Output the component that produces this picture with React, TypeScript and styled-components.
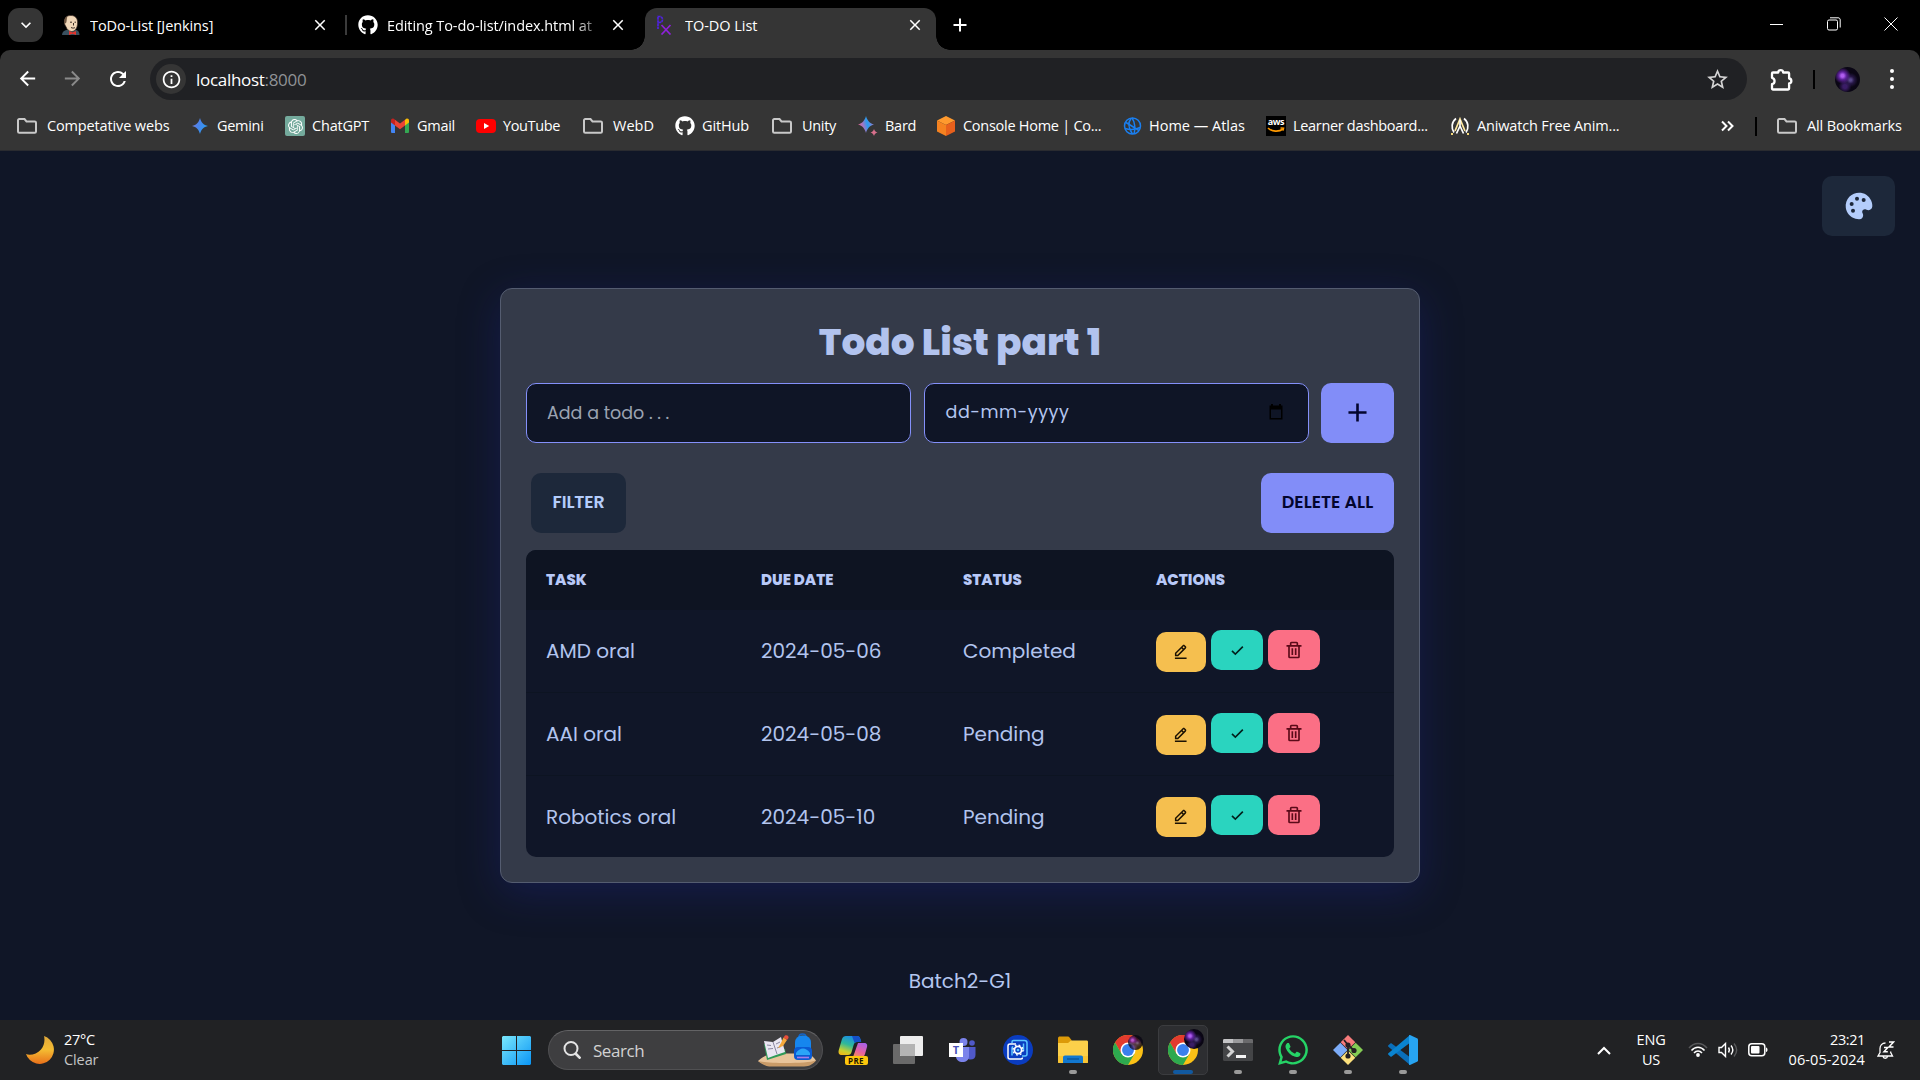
import React from "react";
import styled, { createGlobalStyle } from "styled-components";
import { BiCheck, BiEditAlt, BiPlus, BiSolidPalette, BiTrash } from "react-icons/bi";
import { FaGithub, FaWhatsapp } from "react-icons/fa";
import { SiOpenai } from "react-icons/si";
import {
  MdArrowBack,
  MdArrowForward,
  MdClose,
  MdKeyboardArrowDown,
  MdOutlineInfo,
  MdRefresh,
  MdStarOutline,
} from "react-icons/md";

const UI = `"Segoe UI", "Open Sans", "Noto Sans", sans-serif`;
const PAGE = `"Poppins", "Inter", sans-serif`;

const GlobalStyle = createGlobalStyle`
  * { box-sizing: border-box; }
  html, body { margin: 0; padding: 0; background: #101627; }
  body { width: 1920px; height: 1080px; overflow: hidden; font-family: ${UI}; }
  svg { display: block; flex: none; }
`;

const Screen = styled.div`
  display: flex;
  flex-direction: column;
  width: 1920px;
  height: 1080px;
  overflow: hidden;
`;

const Label = styled.span<{ $ls?: number; $size?: number; $color?: string }>`
  font-size: ${(p) => p.$size ?? 14.5}px;
  letter-spacing: ${(p) => p.$ls ?? 0}px;
  color: ${(p) => p.$color ?? "#fff"};
  white-space: nowrap;
`;

/* ---------- browser window ---------- */

const Browser = styled.header`
  height: 151px;
  background: #000;
  color: #fff;
`;

const TabStrip = styled.div`
  display: flex;
  height: 50px;
  padding: 8px 0 0 8px;
`;

const TabSearch = styled.div`
  display: grid;
  place-items: center;
  width: 35px;
  height: 34px;
  margin-right: 7px;
  border-radius: 11px;
  background: #353535;
`;

const Tab = styled.div<{ $width: number; $end: number; $active?: boolean }>`
  position: relative;
  display: flex;
  align-items: center;
  width: ${(p) => p.$width}px;
  height: 42px;
  padding: 0 ${(p) => p.$end}px 8px 11px;
  border-radius: 12px 12px 0 0;
  background: ${(p) => (p.$active ? "#353535" : "transparent")};
  &::before, &::after {
    content: "";
    display: ${(p) => (p.$active ? "block" : "none")};
    position: absolute;
    bottom: 0;
    width: 14px;
    height: 14px;
  }
  &::before { left: -14px; background: radial-gradient(circle at 0 0, transparent 13.5px, #353535 14px); }
  &::after { right: -14px; background: radial-gradient(circle at 100% 0, transparent 13.5px, #353535 14px); }
`;

const TabTitle = styled.div<{ $gap?: number; $fade?: boolean }>`
  flex: 1;
  margin-left: ${(p) => p.$gap ?? 9}px;
  overflow: hidden;
  white-space: nowrap;
  ${(p) => p.$fade && "margin-right: 10px; mask-image: linear-gradient(90deg, #000 88%, rgba(0,0,0,.3) 99%);"}
`;

const TabDivider = styled.i`
  width: 2px;
  height: 20px;
  margin: 7px 0 0;
  background: #3b3b3b;
`;

const NewTab = styled.div`
  margin: 9px 0 0 16px;
`;

const WindowControls = styled.div`
  display: flex;
  gap: 43px;
  margin: 9px 22px 0 auto;
`;

const Chrome = styled.div`
  height: 101px;
  border-radius: 10px 10px 0 0;
  background: #353535;
  border-bottom: 1px solid #2a2b30;
`;

const Toolbar = styled.div`
  display: flex;
  align-items: center;
  height: 58px;
  padding: 0 16px;
`;

const NavButtons = styled.div`
  display: flex;
  gap: 22px;
  width: 134px;
`;

const Omnibox = styled.div`
  display: flex;
  align-items: center;
  width: 1597px;
  height: 42px;
  padding: 0 17px 0 6px;
  border-radius: 21px;
  background: #202124;
`;

const SiteInfo = styled.div`
  display: grid;
  place-items: center;
  width: 30px;
  height: 30px;
  margin-right: 10px;
  border-radius: 50%;
  background: #353535;
`;

const Url = styled.div`
  flex: 1;
`;

const ToolbarEnd = styled.div`
  display: flex;
  align-items: center;
  margin-left: 22px;
`;

const Bar = styled.i<{ $h: number; $m: string }>`
  width: 2px;
  height: ${(p) => p.$h}px;
  margin: ${(p) => p.$m};
  background: #000;
`;

const Avatar = styled.div<{ $size: number }>`
  width: ${(p) => p.$size}px;
  height: ${(p) => p.$size}px;
  border-radius: 50%;
  background:
    radial-gradient(circle at 30% 35%, #b05df0 0 6%, rgba(110, 40, 180, 0.85) 16%, transparent 34%),
    radial-gradient(circle at 62% 52%, #5a4a8c 0 5%, rgba(50, 30, 90, 0.7) 18%, transparent 36%),
    radial-gradient(circle at 40% 78%, #3a1c66 0 8%, transparent 26%),
    #0a0614;
`;

const Dots = styled.div`
  display: grid;
  gap: 4px;
  margin-left: 30px;
  i { width: 4px; height: 4px; border-radius: 50%; background: #fff; }
`;

const Bookmarks = styled.div`
  display: grid;
  grid-template-columns: 173px 95px 105px 86px 107px 92px 97px 86px 78px 186px 144px 184px 270px 35px 22px 1fr;
  align-items: center;
  height: 36px;
  padding-left: 17px;
`;

const Bookmark = styled.div<{ $folder?: boolean }>`
  display: flex;
  align-items: center;
  gap: ${(p) => (p.$folder ? 10 : 7)}px;
  ${Label} { margin-top: -2px; }
`;

/* ---------- todo page ---------- */

const Page = styled.main`
  display: flex;
  flex-direction: column;
  align-items: center;
  height: 869px;
  background: #101627;
  color: #b4c6ef;
  font-family: ${PAGE};
`;

const ThemeRow = styled.div`
  display: flex;
  justify-content: flex-end;
  width: 100%;
  padding: 25px 25px 0 0;
`;

const Button = styled.button<{ $width: number; $tone: "dark" | "primary"; $ls?: number }>`
  display: grid;
  place-items: center;
  width: ${(p) => p.$width}px;
  height: 60px;
  padding: 0 0 2px;
  border: 0;
  border-radius: 10px;
  background: ${(p) => (p.$tone === "dark" ? "#1d283a" : "#828df8")};
  color: ${(p) => (p.$tone === "dark" ? "#b4cdfb" : "#03052e")};
  font: 600 17.5px ${PAGE};
  letter-spacing: ${(p) => p.$ls ?? 0}px;
`;

const IconButton = styled(Button)`
  padding: 0;
`;

const Card = styled.section`
  width: 920px;
  height: 595px;
  margin-top: 52px;
  padding: 0 25px;
  border: 1px solid #545c70;
  border-radius: 12px;
  background: #343a49;
  box-shadow: 0 10px 40px rgba(31, 38, 135, 0.37);
`;

const Title = styled.h1`
  margin: 30px 0 0;
  height: 64px;
  color: #b2c3ee;
  text-align: center;
  font-size: 37.5px;
  line-height: 46px;
  font-weight: 800;
`;

const Form = styled.div`
  display: flex;
  justify-content: space-between;
`;

const Field = styled.div<{ $placeholder?: boolean }>`
  display: flex;
  align-items: center;
  justify-content: space-between;
  width: 385px;
  height: 60px;
  padding: ${(p) => (p.$placeholder ? "0 25px 1px 20px" : "0 25px 3px 21px")};
  border: 1px solid #8490fa;
  border-radius: 10px;
  background: #0f1526;
  color: ${(p) => (p.$placeholder ? "#9ba3b2" : "#b4c6ef")};
  font-size: 17.5px;
  letter-spacing: ${(p) => (p.$placeholder ? 0 : 0.55)}px;
`;

const Filters = styled.div`
  display: flex;
  justify-content: space-between;
  margin: 30px 0 17px;
  padding-left: 5px;
`;

const Table = styled.div`
  height: 307px;
  border-radius: 10px;
  background: #101628;
  overflow: hidden;
`;

const Row = styled.div<{ $head?: boolean }>`
  display: grid;
  grid-template-columns: 215px 202px 193px 1fr;
  align-items: center;
  height: ${(p) => (p.$head ? 60 : 83)}px;
  padding: ${(p) => (p.$head ? "0 0 2px 20px" : "0 0 0 20px")};
  background: ${(p) => (p.$head ? "#0e1422" : "transparent")};
  font-size: ${(p) => (p.$head ? 15 : 20)}px;
  font-weight: ${(p) => (p.$head ? 800 : 400)};
  border-bottom: ${(p) => (p.$head ? "0" : "1px solid #0d1422")};
  color: ${(p) => (p.$head ? "#b8c9f8" : "#b2c4ee")};
  &:last-child { height: 81px; border-bottom: 0; }
`;

const Cell = styled.span`
  white-space: nowrap;
`;

const Actions = styled.div`
  display: flex;
  gap: 5px;
  padding-bottom: 3px;
`;

const Action = styled.button<{ $kind: "edit" | "done" | "delete" }>`
  display: grid;
  place-items: center;
  width: ${(p) => (p.$kind === "edit" ? 50 : 52)}px;
  height: 40px;
  margin-top: ${(p) => (p.$kind === "edit" ? 2 : 0)}px;
  margin-bottom: ${(p) => (p.$kind === "edit" ? -2 : 0)}px;
  padding: 0;
  border: 0;
  border-radius: 10px;
  background: ${(p) => ({ edit: "#f5bf4f", done: "#2ad4bf", delete: "#fb6f85" })[p.$kind]};
  color: ${(p) => ({ edit: "#1c1203", done: "#02211c", delete: "#5a0a18" })[p.$kind]};
`;

const Credit = styled.p`
  margin: 85px 0 0;
  font-size: 20px;
  line-height: 26px;
`;

/* ---------- taskbar ---------- */

const Taskbar = styled.footer`
  display: flex;
  align-items: center;
  height: 60px;
  background: #212224;
`;

const Weather = styled.div`
  display: flex;
  align-items: center;
  gap: 10px;
  width: 502px;
  padding-left: 26px;
`;

const Stack = styled.div<{ $align?: string }>`
  display: flex;
  flex-direction: column;
  align-items: ${(p) => p.$align ?? "flex-start"};
  line-height: 20px;
`;

const SearchBox = styled.div`
  display: flex;
  align-items: center;
  width: 275px;
  height: 40px;
  margin: 0 2px 0 17px;
  padding: 0 6px 0 14px;
  border: 1px solid #505052;
  border-top-color: #636365;
  border-radius: 20px;
  background: #3e3e40;
`;

const SearchText = styled.div`
  flex: 1;
  margin-left: 12px;
`;

const Apps = styled.div`
  display: grid;
  grid-template-columns: repeat(11, 55px);
`;

const AppSlot = styled.div<{ $state?: "open" | "focused" }>`
  position: relative;
  display: grid;
  place-items: center;
  justify-self: center;
  width: 50px;
  height: 50px;
  border-radius: 5px;
  border: 1px solid ${(p) => (p.$state === "focused" ? "#3b3c3f" : "transparent")};
  background: ${(p) => (p.$state === "focused" ? "#2d2e31" : "transparent")};
  &::after {
    content: "";
    display: ${(p) => (p.$state ? "block" : "none")};
    position: absolute;
    bottom: 0;
    left: 50%;
    transform: translateX(-50%);
    width: ${(p) => (p.$state === "focused" ? 20 : 8)}px;
    height: 4px;
    border-radius: 2px;
    background: ${(p) => (p.$state === "focused" ? "#1159a0" : "#9a9a9a")};
  }
`;

const ProfileBadge = styled.div<{ $top: number; $right: number; $dim?: boolean }>`
  position: absolute;
  top: ${(p) => p.$top}px;
  right: ${(p) => p.$right}px;
  opacity: ${(p) => (p.$dim ? 0.8 : 1)};
`;

const Tray = styled.div`
  display: flex;
  align-items: center;
  margin-left: auto;
  padding-right: 25px;
`;

const Language = styled(Stack)`
  margin-left: 26px;
`;

const Clock = styled(Stack)`
  margin-right: 12px;
`;

const TrayIcons = styled.div`
  display: flex;
  align-items: center;
  gap: 10px;
  margin: 0 21px 0 22px;
`;

/* ---------- drawings ---------- */

const Folder = () => (
  <svg width="20" height="20" viewBox="0 0 20 20" fill="none" stroke="#c9c9c9" strokeWidth="2">
    <path d="M1 15.500V4.300c0-.8.5-1.300 1.300-1.300h5.200l2 2.400h8.200c.8 0 1.300.5 1.300 1.300v8.800c0 .8-.5 1.300-1.300 1.300H2.300c-.8 0-1.300-.5-1.300-1.300z" />
  </svg>
);

const Puzzle = () => (
  <svg width="25" height="25" viewBox="0 0 25 25">
    <path
      d="M4 5.500h5.300c-.2-3.300 5-3.300 4.800 0h5c.6 0 1 .4 1 1v5c3 .2 3 4.800 0 5v5c0 .6-.4 1-1 1H4c-.6 0-1-.4-1-1v-4.300c3.400-.6 3.400-5.800 0-6.400V6.500c0-.6.4-1 1-1z"
      fill="none"
      stroke="#fff"
      strokeWidth="2.300"
      strokeLinejoin="round"
    />
  </svg>
);

const Jenkins = () => (
  <svg width="20" height="20" viewBox="0 0 20 20">
    <path d="M1 20c0-3 2-4.500 5-5.200l8-.3c3 .6 4.500 2.500 4.500 5.500z" fill="#39505f" />
    <path d="M3.500 7C3.500 2 6 .5 10 .5S16.800 3 16.600 8c-.2 5-2.500 8.500-6.100 8.500-2.500 0-5-2.500-5.500-5C4 11 3.500 9 3.500 7z" fill="#f0d6b7" stroke="#3a2a22" strokeWidth=".7" />
    <path d="M3.500 9C2.500 5 4 2 6.500 1.200 5.500 3 6 5 5.300 7.500z" fill="#6d5540" />
    <path d="M9 7.200h2M13.500 7.200h1.500M10 12.500c1.500.8 3 .8 4 0M12.500 8v2.500" stroke="#3a2a22" strokeWidth="1" fill="none" />
    <path d="M8 16l3.500 1.500L15 16v4l-3.500-1.200L8 20z" fill="#e0342c" />
  </svg>
);

const PxLogo = () => (
  <svg width="16" height="20" viewBox="0 0 16 20" fill="none" strokeWidth="1.700">
    <path d="M2 14V1.500h1.500c4 0 4 6 0 6H2" stroke="#4f22e0" strokeDasharray="2.600 .5" />
    <path d="M5.500 10l9 9.500M14.500 10l-9 9.500" stroke="#8e20da" />
  </svg>
);

const Spark = ({ pink }: { pink?: boolean }) => (
  <svg width="20" height="20" viewBox="0 0 20 20">
    <defs>
      <linearGradient id={pink ? "bard" : "gem"} x1="0" x2="1" y1={pink ? ".7" : "0"} y2=".4">
        <stop offset="0" stopColor={pink ? "#ee5f80" : "#8a7fd0"} />
        <stop offset={pink ? ".35" : ".5"} stopColor={pink ? "#9c78c8" : "#4a84ec"} />
        <stop offset={pink ? ".6" : "1"} stopColor="#2a9cf0" />
        {pink && <stop offset="1" stopColor="#9c78c8" />}
      </linearGradient>
    </defs>
    {pink ? (
      <>
        <path d="M8 0c1.300 4.700 3.500 7 8 8.500-4.500 1.500-6.700 3.800-8 8.500-1.300-4.700-3.500-7-8-8.500C4.500 7 6.700 4.700 8 0z" fill="url(#bard)" />
        <path d="M16 13c.6 2 1.500 3 3.500 3.500-2 .5-2.900 1.500-3.500 3.500-.6-2-1.500-3-3.500-3.500 2-.5 2.900-1.500 3.500-3.500z" fill="#d8708c" />
      </>
    ) : (
      <path d="M10 2c1.200 4.600 3.400 6.800 8 8-4.600 1.200-6.800 3.400-8 8-1.200-4.600-3.400-6.800-8-8 4.600-1.200 6.800-3.400 8-8z" fill="url(#gem)" />
    )}
  </svg>
);

const ChatBox = styled.div`
  display: grid;
  place-items: center;
  width: 20px;
  height: 20px;
  border-radius: 2px;
  background: #74aa9c;
`;

const Gmail = () => (
  <svg width="20" height="20" viewBox="0 0 20 20">
    <path d="M1 4.500l4 3V17H2.300C1.500 17 1 16.500 1 15.700z" fill="#4285f4" />
    <path d="M19 4.500l-4 3V17h2.700c.8 0 1.300-.5 1.300-1.300z" fill="#34a853" />
    <path d="M15 3.700l1-.8c1.500-1 3 0 3 1.600v2l-4 3z" fill="#fbbc04" />
    <path d="M5 3.700L4 2.900c-1.500-1-3 0-3 1.600v2l4 3z" fill="#c5221f" />
    <path d="M5 3.700l5 3.800 5-3.800v5.800l-5 3.700-5-3.700z" fill="#ea4335" />
  </svg>
);

const YouTube = () => (
  <svg width="20" height="20" viewBox="0 0 20 20">
    <rect x="0" y="3" width="20" height="14" rx="4" fill="#f00" />
    <path d="M8 7l5.200 3L8 13z" fill="#fff" />
  </svg>
);

const Console = () => (
  <svg width="20" height="20" viewBox="0 0 20 20">
    <path d="M10 0l9 4.500-9 4.500-9-4.500z" fill="#ff9a2e" />
    <path d="M1 4.500L10 9v11l-9-4.500z" fill="#f58220" />
    <path d="M19 4.500L10 9v11l9-4.500z" fill="#e8601c" />
  </svg>
);

const Atlas = () => (
  <svg width="20" height="20" viewBox="0 0 20 20" fill="none" stroke="#1a7ff0" strokeWidth="1.500">
    <circle cx="10.500" cy="10" r="8" />
    <path d="M9 2.500C5.500 7 7 13 10.500 18M3 12.500c5 1.500 11 1 15-1M10 2c3 4 3.500 11 2 16M4 6.500l13 8" />
  </svg>
);

const AwsBox = styled.div`
  display: flex;
  flex-direction: column;
  align-items: center;
  width: 20px;
  height: 20px;
  background: #000;
  font: 700 9px/11px "Open Sans", sans-serif;
  letter-spacing: -0.4px;
`;

const Aws = () => (
  <AwsBox>
    aws
    <svg width="18" height="6" viewBox="0 0 18 6" fill="none" stroke="#ff9900" strokeWidth="1.600">
      <path d="M1 1c4 4 11 4 15 1M13.500 1l3 .2-.5 2.500" />
    </svg>
  </AwsBox>
);

const Aniwatch = () => (
  <svg width="20" height="20" viewBox="0 0 20 20" fill="none" strokeWidth="1.700">
    <path d="M6 2.500C1.500 6 1 12 4 16.500M14 2.500C18.500 6 19 12 16 16.500" stroke="#fff" />
    <path d="M5 15L10 3l5 12" stroke="#ffe9a0" />
    <path d="M6.500 17.500L10 10l3.500 7.500M10 4v6" stroke="#fff" />
    <path d="M1 18h2M17 18h2" stroke="#f5d97a" strokeWidth="2" />
  </svg>
);

const Calendar = () => (
  <svg width="14" height="16" viewBox="0 0 14 16">
    <path d="M2 0h2v1.500h6V0h2v1.500h1.500V15.500H.5V1.500H2zM2 5.500v8.500h10V5.500z" fill="#000" fillRule="evenodd" />
  </svg>
);

const Moon = () => (
  <svg width="28" height="28" viewBox="0 0 28 28">
    <defs>
      <linearGradient id="moon" x1="0" x2="0" y1="0" y2="1">
        <stop offset="0" stopColor="#e0a83a" />
        <stop offset=".5" stopColor="#f4bb32" />
        <stop offset="1" stopColor="#e8701a" />
      </linearGradient>
    </defs>
    <path d="M18 0a14.300 14.300 0 1 1-18 18C4 20 11 18 15 13.500 18.500 9.500 19 4 18 0z" fill="url(#moon)" />
  </svg>
);

const WindowsLogo = () => (
  <svg width="29" height="29" viewBox="0 0 29 29">
    <defs>
      <linearGradient id="win" gradientUnits="userSpaceOnUse" x1="0" y1="0" x2="29" y2="29">
        <stop offset="0" stopColor="#7ae8fc" />
        <stop offset="1" stopColor="#0a95f5" />
      </linearGradient>
    </defs>
    <path d="M1 0h13v14H0V1zM15 0h13l1 1v13H15zM0 15h14v14H1l-1-1zM15 15h14v13l-1 1H15z" fill="url(#win)" />
  </svg>
);

const SearchGlass = () => (
  <svg width="18" height="18" viewBox="0 0 18 18" fill="none" stroke="#e4e4e4" strokeWidth="2">
    <circle cx="8" cy="7.500" r="6.500" />
    <path d="M12.500 12.500l5 5" strokeWidth="2.600" />
  </svg>
);

const StudyArt = () => (
  <svg width="58" height="34" viewBox="0 0 58 34">
    <path d="M0 28C6 22 12 20.500 20 20.500h30c4 1.500 6 4.500 8 7-3 3-8 4-14 4H14C6 31.500 2 30 0 28z" fill="#e8c49a" />
    <path d="M0 28c8 2.500 48 3 58-.5-4 5-8 6-14 6H14C8 33.500 4 31.500 0 28z" fill="#c99b68" />
    <path d="M6 11l3 16 19-6-1-5z" fill="#2f9a58" />
    <path d="M6 8l9 1 8-5 4 15-9 3-8 3z" fill="#e9e6f2" />
    <path d="M15 9l4 12M9 12l4 .5M10 16l5-.5M18 11l4-2M19 15l4-1.500" stroke="#8a86a0" strokeWidth="1" fill="none" />
    <path d="M23 10L20 15l5-2 4-6-3.500-2.500z" fill="#f5a83a" />
    <path d="M25.500 4.500L27 2.500c2-1 4 .5 3.500 2.500L29 7z" fill="#e8503c" />
    <path d="M41 4c0-4 7-4 7 0" fill="none" stroke="#1464c8" strokeWidth="1.600" />
    <rect x="37" y="2.500" width="16" height="24" rx="7" fill="#1686ee" />
    <rect x="36" y="14" width="18" height="13" rx="4" fill="#0a5ad2" />
    <path d="M38 20c4-6 10-6 14 0v2H38z" fill="#2aa4f8" />
    <path d="M39 24.500h12" stroke="#a77be8" strokeWidth="1.600" />
  </svg>
);

const CopilotBox = styled.div`
  position: relative;
  width: 30px;
  height: 30px;
`;

const PreTag = styled.span`
  position: absolute;
  left: 7px;
  bottom: 0;
  width: 23px;
  height: 9px;
  border-radius: 2px;
  background: #fdc70c;
  color: #1c1600;
  font: 700 8px/9px "Open Sans", sans-serif;
  letter-spacing: 0.4px;
  text-align: center;
`;

const Copilot = () => (
  <CopilotBox>
    <svg width="30" height="30" viewBox="0 0 30 30">
      <defs>
        <linearGradient id="cpa" x1=".6" x2=".2" y1="0" y2="1">
          <stop offset="0" stopColor="#1a8be8" />
          <stop offset=".45" stopColor="#2fb89a" />
          <stop offset=".8" stopColor="#c8d030" />
          <stop offset="1" stopColor="#f0b818" />
        </linearGradient>
        <linearGradient id="cpb" x1=".7" x2=".3" y1="0" y2="1">
          <stop offset="0" stopColor="#a860e8" />
          <stop offset=".6" stopColor="#e860a0" />
          <stop offset="1" stopColor="#f08a60" />
        </linearGradient>
      </defs>
      <path d="M8 1h11c2 0 2.800 1 3.400 3l.8 3h-4c-2 0-3 1-3.600 3l-2 7c-.6 2-1.600 3-3.600 3H4c-3 0-4-2-3.200-5L4 4c.7-2 2-3 4-3z" fill="url(#cpa)" />
      <path d="M14 1h5c2 0 2.800 1 3.400 3l.8 3h-4c-1 0-2 .3-2.600 1z" fill="#1450c8" />
      <path d="M20 8h6c3 0 3.500 2 3 4l-2 7c-.6 2-1.500 3-3.500 3H15z" fill="url(#cpb)" />
    </svg>
    <PreTag>PRE</PreTag>
  </CopilotBox>
);

const TaskView = () => (
  <svg width="30" height="28" viewBox="0 0 30 28">
    <rect x="0" y="8" width="22" height="20" rx="1" fill="#6a6a6a" />
    <rect x="7" y="0" width="23" height="20" rx="1" fill="#ededed" />
    <path d="M7 8h15v12H8l-1-1z" fill="#b4b4b4" />
  </svg>
);

const TeamsBox = styled.div`
  position: relative;
  width: 27px;
  height: 26px;
`;

const TeamsT = styled.span`
  position: absolute;
  left: 0;
  top: 6px;
  width: 14px;
  height: 14px;
  background: #fff;
  color: #4a52b8;
  font: 700 11px/14px "Open Sans", sans-serif;
  text-align: center;
`;

const Teams = () => (
  <TeamsBox>
    <svg width="27" height="26" viewBox="0 0 27 26">
      <circle cx="14.500" cy="5" r="4" fill="#7b83eb" />
      <circle cx="23" cy="6" r="2.800" fill="#5059c9" />
      <path d="M17 10h9.500v8c0 3-2 4.500-5 4.500-2.500 0-4.500-1-4.500-4z" fill="#5059c9" />
      <path d="M7 10h13v9c0 4-3 6-6.500 6S7 23 7 19z" fill="#7b83eb" />
    </svg>
    <TeamsT>T</TeamsT>
  </TeamsBox>
);

const SupportApp = () => (
  <svg width="30" height="30" viewBox="0 0 30 30" fill="none" strokeWidth="1.500">
    <circle cx="15" cy="15" r="15" fill="#0a3cc0" />
    <path d="M9 8V7c0-1 .7-1.500 1.500-1.500h11c1.500 0 2.500 1 2.500 2.500v11c0 1.200-1 2-2 2h-3" stroke="#5cc4ff" />
    <path d="M13 9H7C5.800 9 5 9.800 5 11v11c0 1.200.8 2 2 2h11c1 0 1.500-.5 1.500-1.500" stroke="#fff" />
    <path d="M9 20.500V13c0-.8.5-1.200 1.200-1.200M20.500 8.500v7.500" stroke="#5cc4ff" />
    <circle cx="15" cy="15" r="3.600" stroke="#fff" strokeWidth="1.800" />
    <circle cx="15" cy="15" r="5" stroke="#fff" strokeWidth="1.300" strokeDasharray="1.800 2.130" />
    <circle cx="15" cy="15" r="1.300" fill="#5cc4ff" />
  </svg>
);

const Explorer = () => (
  <svg width="30" height="28" viewBox="0 0 30 28">
    <path d="M0 2.500C0 1 .8.500 2 .500h7.500c1 0 1.500.3 2 1L13.500 4v4H0z" fill="#dc9a08" />
    <path d="M0 7h10l3-2.500h15.500c1 0 1.500.5 1.500 1.500v19.500c0 1-.5 1.500-1.500 1.500H1.500C.5 27 0 26.500 0 25.500z" fill="#fcd04a" />
    <path d="M0 20h30v5.500c0 1-.5 1.500-1.500 1.500H1.500C.5 27 0 26.500 0 25.500z" fill="#f9c433" />
    <path d="M5 27v-5.500c0-1.200.8-2 2-2h16c1.200 0 2 .8 2 2V27z" fill="#1278d0" />
    <path d="M9 23h12" stroke="#0a5090" strokeWidth="1.200" />
  </svg>
);

const ChromeLogo = () => (
  <svg width="30" height="30" viewBox="0 0 48 48">
    <circle cx="24" cy="24" r="24" fill="#fbc116" />
    <path d="M24 12h20.800A24 24 0 0 0 3.200 12l10.400 18z" fill="#e33b2e" />
    <path d="M3.200 12A24 24 0 0 0 24 48l10.400-18L24 34l-10.400-4z" fill="#2da94f" />
    <circle cx="24" cy="24" r="12" fill="#fff" />
    <circle cx="24" cy="24" r="9.500" fill="#3a80ee" />
  </svg>
);

const Terminal = () => (
  <svg width="30" height="22" viewBox="0 0 30 22">
    <rect width="30" height="22" rx="1.500" fill="#444547" />
    <path d="M0 4h10V0H1.500C.5 0 0 .5 0 1.500z" fill="#c4c4c6" />
    <path d="M10 0h10v4H10z" fill="#9a9a9c" />
    <path d="M20 0h8.500c1 0 1.500.5 1.500 1.500V4H20z" fill="#6a6a6c" />
    <path d="M4.500 7.500l5 5-5 5" fill="none" stroke="#d4d4d4" strokeWidth="3" />
    <path d="M13 17.500h10" stroke="#f4f4f4" strokeWidth="3" />
  </svg>
);

const GitLogo = () => (
  <svg width="30" height="30" viewBox="0 0 30 30">
    <path d="M15 0l7.300 7.300L15 14.600 7.700 7.300z" fill="#f87c7c" />
    <path d="M7.300 7.700l7.300 7.300-7.300 7.300L0 15z" fill="#7cacf8" />
    <path d="M22.700 7.700L30 15l-7.300 7.300-7.300-7.300z" fill="#84cc54" />
    <path d="M15 15.400l7.300 7.300L15 30l-7.300-7.300z" fill="#fce07c" />
    <path d="M11 5l4 5v11M15 10l6 5.500" stroke="#242022" strokeWidth="1.800" fill="none" />
    <circle cx="15" cy="10" r="2.600" fill="#242022" />
    <circle cx="21" cy="15.500" r="2.600" fill="#242022" />
    <circle cx="15" cy="21" r="2.600" fill="#242022" />
  </svg>
);

const VsCode = () => (
  <svg width="30" height="30" viewBox="0 0 30 30">
    <path d="M.4 10.300l2-1.800c.4-.3.900-.3 1.300 0L22 22.300V30L.4 11.700c-.5-.4-.5-1 0-1.400z" fill="#0a6fba" />
    <path d="M.4 19.700l2 1.800c.4.3.900.3 1.300 0L22 7.700V0L.4 18.300c-.5.400-.5 1 0 1.400z" fill="#0a84d0" />
    <path d="M22 0l7 3.200c.6.3 1 .8 1 1.500v20.600c0 .7-.4 1.200-1 1.500L22 30c-.7.200-1-.2-1-.6V.6c0-.4.3-.8 1-.6z" fill="#27a4f2" />
  </svg>
);

const Wifi = () => (
  <svg width="20" height="16" viewBox="0 0 20 16" fill="none" strokeWidth="1.500">
    <path d="M1 6c5-6 13-6 18 0" stroke="#58595b" />
    <path d="M3.500 8.500c3.500-4.300 9.500-4.300 13 0M6 11c2.200-2.600 5.800-2.600 8 0" stroke="#fff" />
    <circle cx="10" cy="13" r="1.900" fill="#fff" />
  </svg>
);

const Speaker = () => (
  <svg width="20" height="16" viewBox="0 0 20 16" fill="none" stroke="#fff" strokeWidth="1.400">
    <path d="M1 5.500h2.500L7.500 1.500v13l-4-4H1z" />
    <path d="M10.500 5.500c1 1.500 1 3.500 0 5M13 3.500c2.200 2.700 2.200 6.300 0 9" />
    <path d="M16 1.500c3.300 4 3.300 9 0 13" stroke="#58595b" />
  </svg>
);

const Battery = () => (
  <svg width="20" height="14" viewBox="0 0 20 14">
    <rect x=".8" y=".8" width="16" height="12" rx="3" fill="none" stroke="#fff" strokeWidth="1.500" />
    <rect x="3" y="3" width="8.500" height="7.600" rx="1" fill="#fff" />
    <path d="M18 4.500c2 .3 2 4.300 0 4.600z" fill="#fff" />
  </svg>
);

const Bell = () => (
  <svg width="18" height="19" viewBox="0 0 18 19" fill="none" stroke="#fff" strokeWidth="1.300">
    <path d="M8.500 2C5 2 3 4.500 3 7.500v4L1 15h14.500l-1.800-3.500V10.500M6 15.500c.3 2.300 4.200 2.300 4.500 0" />
    <path d="M12 1h4.500L12 6h4.500M7 6.500h3.800L7 10.800h3.800" strokeWidth="1.500" />
  </svg>
);

/* ---------- content ---------- */

const bookmarks: { icon: React.ReactNode; text: string; ls: number; folder?: boolean }[] = [
  { icon: <Folder />, text: "Competative webs", ls: -0.14, folder: true },
  { icon: <Spark />, text: "Gemini", ls: -0.3 },
  { icon: <ChatBox><SiOpenai size={15} /></ChatBox>, text: "ChatGPT", ls: -0.2 },
  { icon: <Gmail />, text: "Gmail", ls: -0.27 },
  { icon: <YouTube />, text: "YouTube", ls: -0.38 },
  { icon: <Folder />, text: "WebD", ls: 0, folder: true },
  { icon: <FaGithub size={20} />, text: "GitHub", ls: -0.14 },
  { icon: <Folder />, text: "Unity", ls: -0.3, folder: true },
  { icon: <Spark pink />, text: "Bard", ls: -0.25 },
  { icon: <Console />, text: "Console Home | Co...", ls: -0.27 },
  { icon: <Atlas />, text: "Home — Atlas", ls: 0 },
  { icon: <Aws />, text: "Learner dashboard...", ls: -0.32 },
  { icon: <Aniwatch />, text: "Aniwatch Free Anim...", ls: -0.16 },
];

const head = ["TASK", "DUE DATE", "STATUS", "ACTIONS"];
const todos = [
  ["AMD oral", "2024-05-06", "Completed"],
  ["AAI oral", "2024-05-08", "Pending"],
  ["Robotics oral", "2024-05-10", "Pending"],
];

export default function App() {
  return (
    <Screen>
      <GlobalStyle />
      <Browser>
        <TabStrip>
          <TabSearch><MdKeyboardArrowDown size={20} /></TabSearch>
          <Tab $width={295} $end={16}>
            <Jenkins />
            <TabTitle><Label $ls={-0.1}>ToDo-List [Jenkins]</Label></TabTitle>
            <MdClose size={18} />
          </Tab>
          <TabDivider />
          <Tab $width={298} $end={18}>
            <FaGithub size={20} />
            <TabTitle $fade><Label $ls={-0.08}>Editing To-do-list/index.html at</Label></TabTitle>
            <MdClose size={18} />
          </Tab>
          <Tab $width={291} $end={12} $active>
            <PxLogo />
            <TabTitle $gap={13}><Label $ls={-0.04}>TO-DO List</Label></TabTitle>
            <MdClose size={18} />
          </Tab>
          <NewTab>
            <svg width="16" height="16" viewBox="0 0 16 16" stroke="#fff" strokeWidth="2"><path d="M8 1.500v13M1.500 8h13" /></svg>
          </NewTab>
          <WindowControls>
            <svg width="14" height="14" viewBox="0 0 14 14" stroke="#fff"><path d="M0 7.500h13" /></svg>
            <svg width="14" height="14" viewBox="0 0 14 14" stroke="#fff" fill="none">
              <rect x=".5" y="3" width="10" height="10" rx="1.500" />
              <path d="M3 .8h8c1.500 0 2.200.8 2.200 2.200v7.500" />
            </svg>
            <svg width="14" height="14" viewBox="0 0 14 14" stroke="#fff"><path d="M.5.5l13 13M13.500.5l-13 13" /></svg>
          </WindowControls>
        </TabStrip>
        <Chrome>
          <Toolbar>
            <NavButtons>
              <MdArrowBack size={23} />
              <MdArrowForward size={23} color="#8a8a8a" />
              <MdRefresh size={24} />
            </NavButtons>
            <Omnibox>
              <SiteInfo><MdOutlineInfo size={21} /></SiteInfo>
              <Url>
                <Label $size={17} $ls={-0.3}>localhost</Label>
                <Label $size={17} $ls={-0.3} $color="#8f9296">:8000</Label>
              </Url>
              <MdStarOutline size={25} color="#d4d4d4" />
            </Omnibox>
            <ToolbarEnd>
              <Puzzle />
              <Bar $h={19} $m="0 20px 0 19px" />
              <Avatar $size={25} />
              <Dots><i /><i /><i /></Dots>
            </ToolbarEnd>
          </Toolbar>
          <Bookmarks>
            {bookmarks.map((b) => (
              <Bookmark key={b.text} $folder={b.folder}>
                {b.icon}
                <Label $ls={b.ls}>{b.text}</Label>
              </Bookmark>
            ))}
            <svg width="14" height="12" viewBox="0 0 14 12" fill="none" stroke="#fff" strokeWidth="2"><path d="M2 1.500L6.500 6 2 10.500M8 1.500L12.500 6 8 10.500" /></svg>
            <Bar $h={19} $m="0" />
            <Bookmark $folder>
              <Folder />
              <Label $ls={-0.14}>All Bookmarks</Label>
            </Bookmark>
          </Bookmarks>
        </Chrome>
      </Browser>

      <Page>
        <ThemeRow>
          <IconButton $width={73} $tone="dark"><BiSolidPalette size={32} /></IconButton>
        </ThemeRow>
        <Card>
          <Title>Todo List part 1</Title>
          <Form>
            <Field $placeholder>Add a todo . . .</Field>
            <Field>dd-mm-yyyy<Calendar /></Field>
            <Button $width={73} $tone="primary"><BiPlus size={31} /></Button>
          </Form>
          <Filters>
            <Button $width={95} $tone="dark" $ls={-0.15}>FILTER</Button>
            <Button $width={133} $tone="primary">DELETE ALL</Button>
          </Filters>
          <Table>
            <Row $head>{head.map((t) => <Cell key={t}>{t}</Cell>)}</Row>
            {todos.map((cells) => (
              <Row key={cells[0]}>
                {cells.map((t) => <Cell key={t}>{t}</Cell>)}
                <Actions>
                  <Action $kind="edit"><BiEditAlt size={17.5} /></Action>
                  <Action $kind="done"><BiCheck size={20} /></Action>
                  <Action $kind="delete"><BiTrash size={20} /></Action>
                </Actions>
              </Row>
            ))}
          </Table>
        </Card>
        <Credit>Batch2-G1</Credit>
      </Page>

      <Taskbar>
        <Weather>
          <Moon />
          <Stack>
            <Label $ls={-0.3}>27°C</Label>
            <Label $ls={-0.1} $color="#c4c5c6">Clear</Label>
          </Stack>
        </Weather>
        <WindowsLogo />
        <SearchBox>
          <SearchGlass />
          <SearchText><Label $size={17} $ls={-0.45} $color="#d2d2d2">Search</Label></SearchText>
          <StudyArt />
        </SearchBox>
        <Apps>
          <AppSlot><Copilot /></AppSlot>
          <AppSlot><TaskView /></AppSlot>
          <AppSlot><Teams /></AppSlot>
          <AppSlot><SupportApp /></AppSlot>
          <AppSlot $state="open"><Explorer /></AppSlot>
          <AppSlot>
            <ChromeLogo />
            <ProfileBadge $top={9} $right={9} $dim><Avatar $size={15} /></ProfileBadge>
          </AppSlot>
          <AppSlot $state="focused">
            <ChromeLogo />
            <ProfileBadge $top={3} $right={3}><Avatar $size={20} /></ProfileBadge>
          </AppSlot>
          <AppSlot $state="open"><Terminal /></AppSlot>
          <AppSlot $state="open"><FaWhatsapp size={34} color="#25d366" /></AppSlot>
          <AppSlot $state="open"><GitLogo /></AppSlot>
          <AppSlot $state="open"><VsCode /></AppSlot>
        </Apps>
        <Tray>
          <svg width="14" height="9" viewBox="0 0 14 9" fill="none" stroke="#fff" strokeWidth="2"><path d="M1 8l6-6 6 6" /></svg>
          <Language $align="center">
            <Label $ls={-0.17}>ENG</Label>
            <Label $ls={-0.17}>US</Label>
          </Language>
          <TrayIcons>
            <Wifi />
            <Speaker />
            <Battery />
          </TrayIcons>
          <Clock $align="flex-end">
            <Label $ls={-0.4}>23:21</Label>
            <Label $ls={0.08}>06-05-2024</Label>
          </Clock>
          <Bell />
        </Tray>
      </Taskbar>
    </Screen>
  );
}
